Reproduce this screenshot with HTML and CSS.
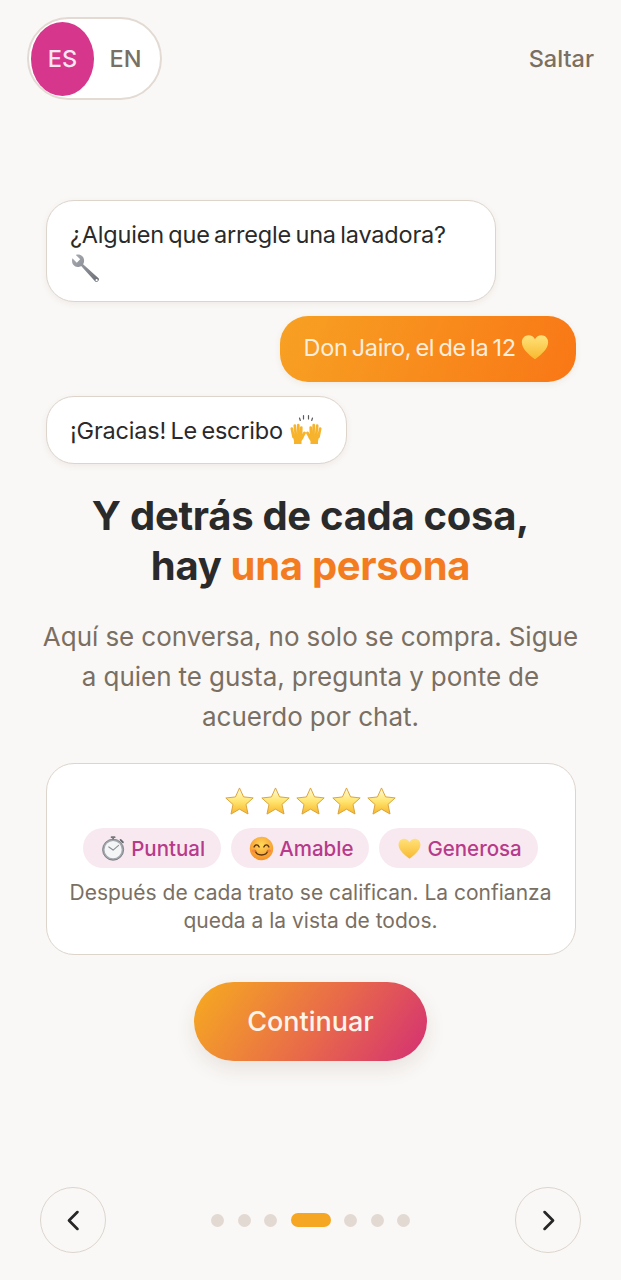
FILE: index.html
```html
<!DOCTYPE html>
<html lang="es">
<head>
    <meta charset="UTF-8">
    <meta name="viewport" content="width=device-width, initial-scale=1.0">
    <title>Onboarding</title>
    <link rel="stylesheet" href="styles.css">
</head>
<body>
    <!-- Emoji artwork, reused below -->
    <svg class="sprite" width="0" height="0">
        <defs>
            <linearGradient id="star-fill" x1="0" y1="0" x2="0" y2="1">
                <stop offset="0" stop-color="#fffbe0"/>
                <stop offset="0.5" stop-color="#ffe670"/>
                <stop offset="1" stop-color="#f8b52a"/>
            </linearGradient>
            <linearGradient id="heart-fill" x1="0" y1="0" x2="0" y2="1">
                <stop offset="0" stop-color="#ffe27a"/>
                <stop offset="1" stop-color="#f8b92f"/>
            </linearGradient>
            <linearGradient id="steel-fill" x1="0" y1="0" x2="1" y2="1">
                <stop offset="0" stop-color="#a9adb3"/>
                <stop offset="1" stop-color="#6b6f75"/>
            </linearGradient>
            <radialGradient id="face-fill" cx="0.5" cy="0.35" r="0.7">
                <stop offset="0" stop-color="#ffd95a"/>
                <stop offset="1" stop-color="#f58a22"/>
            </radialGradient>
            <symbol id="star" viewBox="0 0 32 32">
                <path d="M16 2l4.200 9.200 9.900 1.100-7.400 6.700 2.100 9.900L16 23.900 7.200 29l2.100-9.900-7.400-6.700 9.900-1.100z" fill="url(#star-fill)" stroke="#d9a23a" stroke-width="1" stroke-linejoin="round"/>
            </symbol>
            <symbol id="heart" viewBox="0 0 32 32">
                <path d="M16 29C8 23 2 17.500 2 10.800 2 6.500 5.300 3.500 9.200 3.500c2.900 0 5.400 1.600 6.800 4.300 1.400-2.700 3.900-4.300 6.800-4.300 3.900 0 7.200 3 7.200 7.300C30 17.500 24 23 16 29z" fill="url(#heart-fill)"/>
            </symbol>
            <symbol id="hand" viewBox="0 0 16 32">
                <g stroke="#f6b32b" stroke-linecap="round" fill="none">
                    <path d="M3.500 24L1.800 15.500M5.800 22L4.800 12.500M8.500 22L8.300 12.200M11 23L11.300 14.500" stroke-width="2.700"/>
                    <path d="M11.500 25L14.500 20" stroke-width="2.900"/>
                </g>
                <path d="M2.500 22h10.500l.5 3-2 3v3H4v-3z" fill="#f6b32b"/>
            </symbol>
        </defs>
    </svg>

    <main class="screen">
        <header class="top-bar">
            <div class="lang-toggle">
                <span class="lang lang-active">ES</span>
                <span class="lang">EN</span>
            </div>
            <span class="skip">Saltar</span>
        </header>

        <section class="chat">
            <div class="bubble bubble-wide">¿Alguien que arregle una lavadora?<br>
                <svg class="emoji emoji-wrench" viewBox="0 0 32 32">
                    <path d="M2.500 5.500L7 10l3.500-3.500L6 2c4.500-1.500 9 1.500 8.500 6.500 0 1-.3 2-1 3L29.500 26c1.500 2-1.500 5-3.500 3.500L11.500 13.500c-1 .7-2.500 1-3.500 1-4.500 0-7-4.500-5.500-9z" fill="url(#steel-fill)"/>
                    <circle cx="27.500" cy="28" r="1.100" fill="#fff"/>
                </svg>
            </div>
            <div class="bubble bubble-mine">Don Jairo, el de la 12
                <svg class="emoji"><use href="#heart"/></svg>
            </div>
            <div class="bubble bubble-short">¡Gracias! Le escribo
                <svg class="emoji emoji-hands" viewBox="0 0 32 32">
                    <use href="#hand" width="16" height="32"/>
                    <use href="#hand" width="16" height="32" transform="matrix(-1 0 0 1 32 0)"/>
                    <path d="M9.500 5l.8 2.500M13.500 2.500v3.500M18.500 2.500v3.500M22.500 5l-.8 2.500" stroke="#5a5a5a" stroke-width="1.200" stroke-linecap="round"/>
                </svg>
            </div>
        </section>

        <h1 class="title">Y detrás de cada cosa,<br>hay <span class="title-accent">una persona</span></h1>
        <p class="lead">Aquí se conversa, no solo se compra. Sigue a quien te gusta, pregunta y ponte de acuerdo por chat.</p>

        <section class="card">
            <div class="stars">
                <svg class="star"><use href="#star"/></svg>
                <svg class="star"><use href="#star"/></svg>
                <svg class="star"><use href="#star"/></svg>
                <svg class="star"><use href="#star"/></svg>
                <svg class="star"><use href="#star"/></svg>
            </div>
            <div class="chips">
                <span class="chip">
                    <svg class="chip-icon" viewBox="0 0 32 32">
                        <path d="M13.500 1.500h4M15.500 2v3" stroke="#777" stroke-width="2.200" stroke-linecap="round"/>
                        <path d="M25 5l3 3" stroke="#666a70" stroke-width="2.400" stroke-linecap="round"/>
                        <circle cx="15.500" cy="17.500" r="13.500" fill="#a4a8ae" stroke="#6f7379" stroke-width="1"/>
                        <circle cx="15.500" cy="17.500" r="11" fill="#f4f5f6"/>
                        <path d="M15.500 18L10 14M15.500 18l7-6" stroke="#8a8e94" stroke-width="1.400" stroke-linecap="round"/>
                    </svg>
                    Puntual
                </span>
                <span class="chip">
                    <svg class="chip-icon" viewBox="0 0 32 32">
                        <circle cx="16" cy="16" r="15" fill="url(#face-fill)"/>
                        <path d="M6.500 14c1.500-3.500 5-3.500 6.500 0M19 14c1.500-3.500 5-3.500 6.500 0" fill="none" stroke="#5c3312" stroke-width="1.800" stroke-linecap="round"/>
                        <path d="M8 19c2 7 14 7 16 0" fill="none" stroke="#5c3312" stroke-width="1.800" stroke-linecap="round"/>
                        <ellipse cx="6.500" cy="19" rx="3" ry="2" fill="#f47c4a" opacity=".7"/>
                        <ellipse cx="25.500" cy="19" rx="3" ry="2" fill="#f47c4a" opacity=".7"/>
                    </svg>
                    Amable
                </span>
                <span class="chip">
                    <svg class="chip-icon"><use href="#heart"/></svg>
                    Generosa
                </span>
            </div>
            <p class="card-text">Después de cada trato se califican. La confianza queda a la vista de todos.</p>
        </section>

        <button class="cta">Continuar</button>

        <nav class="pager">
            <button class="round-btn" aria-label="Anterior">
                <svg class="chevron" viewBox="0 0 24 24"><path d="M15.500 4.500L8 12l7.500 7.500"/></svg>
            </button>
            <div class="dots">
                <span class="dot"></span>
                <span class="dot"></span>
                <span class="dot"></span>
                <span class="dot dot-active"></span>
                <span class="dot"></span>
                <span class="dot"></span>
                <span class="dot"></span>
            </div>
            <button class="round-btn" aria-label="Siguiente">
                <svg class="chevron" viewBox="0 0 24 24"><path d="M8.500 4.500L16 12l-7.500 7.500"/></svg>
            </button>
        </nav>
    </main>
</body>
</html>
```

FILE: styles.css
```css
* {
    margin: 0;
    padding: 0;
    box-sizing: border-box;
}

body {
    background: #faf8f6;
    color: #2a2a2a;
    font-family: 'Inter', 'Liberation Sans', sans-serif;
}

.sprite {
    position: absolute;
}

.screen {
    width: 621px;
    height: 1280px;
    display: flex;
    flex-direction: column;
    align-items: center;
    overflow: hidden;
}

/* Top bar */
.top-bar {
    width: 100%;
    display: flex;
    justify-content: space-between;
    align-items: center;
    padding: 17px 27px 0;
    height: 100px;
}

.lang-toggle {
    width: 135px;
    height: 83px;
    display: flex;
    align-items: center;
    padding-left: 2px;
    background: #fff;
    border: 2px solid #e2dad3;
    border-radius: 42px;
}

.lang {
    width: 63px;
    height: 74px;
    display: flex;
    align-items: center;
    justify-content: center;
    font-size: 23.5px;
    font-weight: 500;
    color: #7a6f63;
}

.lang-active {
    background: #d6368c;
    color: #fbe6f1;
    border-radius: 50%;
}

.skip {
    font-size: 23.5px;
    font-weight: 500;
    color: #7a6f63;
}

/* Chat */
.chat {
    width: 100%;
    margin-top: 100px;
    padding: 0 45px 0 46px;
    display: flex;
    flex-direction: column;
    align-items: flex-start;
    gap: 14px;
}

.bubble {
    padding: 15.5px 23px;
    background: #fff;
    border: 1.5px solid #ddd4cc;
    border-radius: 28px;
    box-shadow: 0 2px 6px rgba(90, 70, 50, 0.08);
    font-size: 23.5px;
    line-height: 36px;
    letter-spacing: -0.2px;
    word-spacing: -2px;
    color: #2a2a2a;
    white-space: nowrap;
}

.bubble-wide {
    width: 450px;
    height: 102px;
}

.bubble-mine {
    align-self: flex-end;
    height: 66px;
    padding: 14px 26px 14px 24px;
    border: none;
    letter-spacing: -0.35px;
    color: #fdeedd;
    background: linear-gradient(110deg, #f7a123, #f97716);
}

.bubble-short {
    height: 68px;
    padding-right: 24px;
}

.emoji {
    width: 30px;
    height: 30px;
    vertical-align: -6px;
}

.emoji-wrench {
    width: 31px;
    height: 31px;
    vertical-align: -5px;
}

.emoji-hands {
    width: 32px;
    height: 32px;
    margin-left: 3px;
}

/* Heading */
.title {
    margin-top: 27px;
    font-size: 40px;
    line-height: 50px;
    font-weight: 700;
    letter-spacing: -0.3px;
    text-align: center;
    color: #2a2a2a;
}

.title-accent {
    color: #f47c20;
}

.lead {
    width: 545px;
    margin-top: 26px;
    font-size: 26px;
    line-height: 40px;
    word-spacing: -0.3px;
    text-align: center;
    color: #7a6f63;
}

/* Rating card */
.card {
    width: 530px;
    height: 192px;
    margin-top: 26px;
    padding-top: 22px;
    background: #fff;
    border: 1.5px solid #ddd4cc;
    border-radius: 28px;
    display: flex;
    flex-direction: column;
    align-items: center;
}

.stars {
    display: flex;
    gap: 4.5px;
}

.star {
    width: 31px;
    height: 31px;
}

.chips {
    margin-top: 11px;
    display: flex;
    gap: 10px;
}

.chip {
    height: 40px;
    padding: 0 16px 0 18px;
    display: flex;
    align-items: center;
    gap: 5px;
    background: #f8e9f1;
    border-radius: 20px;
    font-size: 20.5px;
    font-weight: 500;
    color: #b83a8a;
}

.chip-icon {
    width: 25px;
    height: 25px;
}

.card-text {
    width: 500px;
    margin-top: 11px;
    font-size: 21px;
    line-height: 28px;
    text-align: center;
    color: #7a6f63;
}

/* Main button */
.cta {
    width: 233px;
    height: 79px;
    margin-top: 27px;
    border: none;
    border-radius: 40px;
    background: linear-gradient(125deg, #f5a623 5%, #e8694a 55%, #d6366f 95%);
    box-shadow: 0 8px 20px rgba(60, 40, 30, 0.1);
    font-family: inherit;
    font-size: 27px;
    font-weight: 500;
    color: #fff4ea;
}

/* Pager */
.pager {
    width: 100%;
    margin-top: auto;
    margin-bottom: 27px;
    padding: 0 40px;
    display: flex;
    justify-content: space-between;
    align-items: center;
}

.round-btn {
    width: 66px;
    height: 66px;
    display: flex;
    align-items: center;
    justify-content: center;
    background: transparent;
    border: 1.5px solid #dcd5ce;
    border-radius: 50%;
}

.chevron {
    width: 27px;
    height: 27px;
    fill: none;
    stroke: #262626;
    stroke-width: 2.4;
    stroke-linecap: round;
    stroke-linejoin: round;
}

.dots {
    display: flex;
    align-items: center;
    gap: 13.5px;
}

.dot {
    width: 13px;
    height: 13px;
    background: #e2d9d2;
    border-radius: 50%;
}

.dot-active {
    width: 40px;
    height: 14px;
    background: #f5a623;
    border-radius: 7px;
}
```
